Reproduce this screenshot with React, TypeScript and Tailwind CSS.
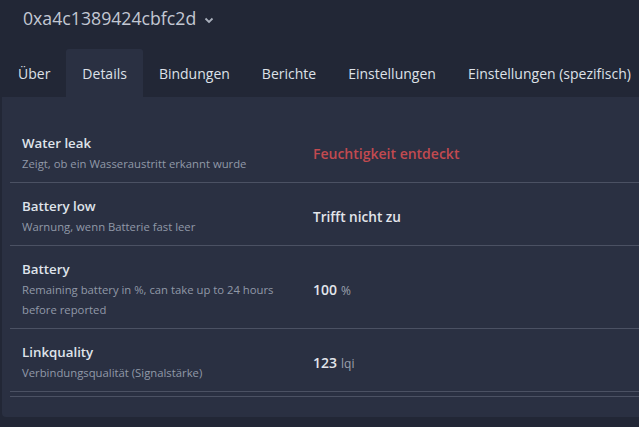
import React from "react";

const tabs = ["Über", "Details", "Bindungen", "Berichte", "Einstellungen", "Einstellungen (spezifisch)"];

type Row = { title: string; desc: string; value: React.ReactNode };

const rows: Row[] = [
  {
    title: "Water leak",
    desc: "Zeigt, ob ein Wasseraustritt erkannt wurde",
    value: <span className="text-[#c24a50] font-semibold text-[14px]">Feuchtigkeit entdeckt</span>,
  },
  {
    title: "Battery low",
    desc: "Warnung, wenn Batterie fast leer",
    value: <span className="text-[#e2e5eb] font-semibold text-[13.6px]">Trifft nicht zu</span>,
  },
  {
    title: "Battery",
    desc: "Remaining battery in %, can take up to 24 hours before reported",
    value: (
      <span>
        <span className="text-[#e2e5eb] font-semibold text-[14px]">100</span>
        <span className="text-[#9aa1ae] text-[12px] ml-1">%</span>
      </span>
    ),
  },
  {
    title: "Linkquality",
    desc: "Verbindungsqualität (Signalstärke)",
    value: (
      <span>
        <span className="text-[#e2e5eb] font-semibold text-[14px]">123</span>
        <span className="text-[#9aa1ae] text-[12px] ml-1">lqi</span>
      </span>
    ),
  },
];

export default function App() {
  return (
    <div
      className="w-[639px] h-[427px] overflow-hidden bg-[#222736] flex flex-col"
      style={{ fontFamily: '"Open Sans", "Noto Sans", sans-serif' }}
    >
      <div className="h-[49px] flex items-center pl-[23px] pb-[11px] gap-[8px]">
        <span className="text-[17.7px] text-[#c3c8d3] leading-none">0xa4c1389424cbfc2d</span>
        <svg width="10" height="7" viewBox="0 0 10 7" className="mt-[2px]">
          <path d="M1.5 1.5 L5 5 L8.5 1.5" stroke="#aab0bc" strokeWidth="1.8" fill="none" />
        </svg>
      </div>
      <div className="flex h-[48px] pl-[2px]">
        {tabs.map((t) => (
          <div
            key={t}
            className={
              "flex shrink-0 whitespace-nowrap items-center px-[16px] text-[14px] text-[#dde1e8] rounded-t-[3px] " +
              (t === "Details" ? "bg-[#2a3042]" : "")
            }
          >
            {t}
          </div>
        ))}
      </div>
      <div className="ml-[2px] w-[660px] shrink-0 bg-[#2a3042] rounded-b-[4px] pt-[23px] pb-[20px] pl-[8px]">
        <div className="flex flex-col">
          {rows.map((r) => (
            <div key={r.title} className="flex items-center border-b border-[#4b5163] pt-[13px] pb-[8px]">
              <div className="w-[303px] shrink-0 pl-[12px] pr-[24px] flex flex-col">
                <span className="text-[13.3px] font-semibold text-[#dfe3ea] leading-[21px]">{r.title}</span>
                <span className="text-[11.3px] text-[#9199a8] leading-[20px]">{r.desc}</span>
              </div>
              <div className="pb-[2px]">{r.value}</div>
            </div>
          ))}
          <div className="h-[5px] border-b border-[#4b5163]" />
        </div>
      </div>
    </div>
  );
}
